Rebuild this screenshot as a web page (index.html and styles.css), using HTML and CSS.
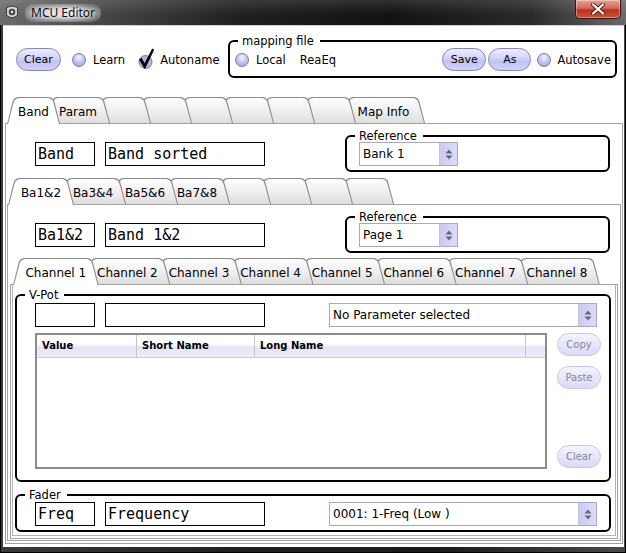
FILE: index.html
```html
<!DOCTYPE html>
<html lang="en">
<head>
<meta charset="utf-8">
<title>MCU Editor</title>
<link rel="stylesheet" href="styles.css">
</head>
<body>
<div class="window">
  <div class="titlebar">
    <svg class="appicon" width="14" height="15" viewBox="0 0 14 15">
      <path d="M1.5 2.5 Q7 -0.5 12.5 2.5 L12.5 10 Q7 15.5 1.5 10 Z" fill="#d4d4d4" stroke="#3a3a3a" stroke-width="1"/>
      <circle cx="7" cy="7" r="3.2" fill="#3c3c3c"/>
      <circle cx="7" cy="7" r="1.4" fill="#e0e0e0"/>
    </svg>
    <span class="title">MCU Editor</span>
    <div class="close">
      <svg width="16" height="12" viewBox="0 0 16 12">
        <path d="M3 1.5 L13 10.5 M13 1.5 L3 10.5" stroke="#5a1a12" stroke-width="4" stroke-linecap="round"/>
        <path d="M3 1.5 L13 10.5 M13 1.5 L3 10.5" stroke="#fff" stroke-width="2.2" stroke-linecap="round"/>
      </svg>
    </div>
  </div>

  <div class="client">
    <div class="toprow">
      <div class="leftctl">
        <div class="pill btn-clear">Clear</div>
        <span class="radio r-learn"></span>
        <span class="lbl l-learn">Learn</span>
        <svg class="check" width="17" height="24" viewBox="0 0 17 24">
          <circle cx="7.5" cy="14" r="6.5" fill="#b4b4ec" stroke="#7a7aa8" stroke-width="1"/>
          <path d="M1 11.5 L3.6 9.8 L6.6 15.2 L14.2 0.6 L16.2 1.8 L6.8 21.2 Z" fill="#000"/>
        </svg>
        <span class="lbl l-auto">Autoname</span>
      </div>
      <fieldset class="group mapgrp">
        <legend>mapping file</legend>
        <div class="mapin">
          <span class="radio"></span>
          <span class="lbl l-local">Local</span>
          <span class="lbl l-reaeq">ReaEq</span>
          <span class="spacer"></span>
          <div class="pill btn-save">Save</div>
          <div class="pill btn-as">As</div>
          <span class="radio r-autosave"></span>
          <span class="lbl l-autosave">Autosave</span>
        </div>
      </fieldset>
    </div>

    <div class="tabset ts1">
      <div class="tabbar tb1">
        <div class="tab sel t-band"><span>Band</span></div>
        <div class="tab t-param"><span>Param</span></div>
        <div class="tab t-empty"></div>
        <div class="tab t-empty"></div>
        <div class="tab t-empty"></div>
        <div class="tab t-empty"></div>
        <div class="tab t-empty"></div>
        <div class="tab t-empty"></div>
        <div class="tab t-map"><span>Map Info</span></div>
      </div>
      <div class="panel">
        <div class="prow pr1">
          <div class="field fs">Band</div>
          <div class="field fl">Band sorted</div>
          <fieldset class="group refgrp">
            <legend>Reference</legend>
            <div class="refin">
              <div class="combo cref"><span class="val">Bank 1</span><span class="arr"><svg width="8" height="11" viewBox="0 0 8 11"><path d="M4 0.5 L7.5 4.5 L0.5 4.5 Z M0.5 6.5 L7.5 6.5 L4 10.5 Z" fill="#66667a"/></svg></span></div>
            </div>
          </fieldset>
        </div>

        <div class="tabset ts2">
          <div class="tabbar tb2">
            <div class="tab sel t-ba"><span>Ba1&amp;2</span></div>
            <div class="tab t-ba"><span>Ba3&amp;4</span></div>
            <div class="tab t-ba"><span>Ba5&amp;6</span></div>
            <div class="tab t-ba"><span>Ba7&amp;8</span></div>
            <div class="tab t-empty"></div>
            <div class="tab t-empty"></div>
            <div class="tab t-empty"></div>
            <div class="tab t-empty"></div>
          </div>
          <div class="panel">
            <div class="prow pr2">
              <div class="field fs">Ba1&amp;2</div>
              <div class="field fl">Band 1&amp;2</div>
              <fieldset class="group refgrp">
                <legend>Reference</legend>
                <div class="refin">
                  <div class="combo cref"><span class="val">Page 1</span><span class="arr"><svg width="8" height="11" viewBox="0 0 8 11"><path d="M4 0.5 L7.5 4.5 L0.5 4.5 Z M0.5 6.5 L7.5 6.5 L4 10.5 Z" fill="#66667a"/></svg></span></div>
                </div>
              </fieldset>
            </div>

            <div class="tabset ts3">
              <div class="tabbar tb3">
                <div class="tab sel t-ch"><span>Channel 1</span></div>
                <div class="tab t-ch"><span>Channel 2</span></div>
                <div class="tab t-ch"><span>Channel 3</span></div>
                <div class="tab t-ch"><span>Channel 4</span></div>
                <div class="tab t-ch"><span>Channel 5</span></div>
                <div class="tab t-ch"><span>Channel 6</span></div>
                <div class="tab t-ch"><span>Channel 7</span></div>
                <div class="tab t-ch"><span>Channel 8</span></div>
              </div>
              <div class="panel">
                <div class="inner">
                  <fieldset class="group vpot">
                    <legend>V-Pot</legend>
                    <div class="gin">
                      <div class="grow">
                        <div class="field fs"></div>
                        <div class="field fl"></div>
                        <div class="combo cwide"><span class="val">No Parameter selected</span><span class="arr"><svg width="8" height="11" viewBox="0 0 8 11"><path d="M4 0.5 L7.5 4.5 L0.5 4.5 Z M0.5 6.5 L7.5 6.5 L4 10.5 Z" fill="#66667a"/></svg></span></div>
                      </div>
                      <div class="trow">
                        <div class="table">
                          <div class="thead">
                            <div class="th c1">Value</div>
                            <div class="th c2">Short Name</div>
                            <div class="th c3">Long Name</div>
                            <div class="th c4"></div>
                          </div>
                        </div>
                        <div class="btncol">
                          <div class="sbtn">Copy</div>
                          <div class="sbtn b-paste">Paste</div>
                          <div class="sbtn b-clear">Clear</div>
                        </div>
                      </div>
                    </div>
                  </fieldset>
                  <fieldset class="group fader">
                    <legend>Fader</legend>
                    <div class="gin">
                      <div class="grow">
                        <div class="field fs">Freq</div>
                        <div class="field fl">Frequency</div>
                        <div class="combo cwide"><span class="val">0001: 1-Freq (Low )</span><span class="arr"><svg width="8" height="11" viewBox="0 0 8 11"><path d="M4 0.5 L7.5 4.5 L0.5 4.5 Z M0.5 6.5 L7.5 6.5 L4 10.5 Z" fill="#66667a"/></svg></span></div>
                      </div>
                    </div>
                  </fieldset>
                </div>
              </div>
            </div>
          </div>
        </div>
      </div>
    </div>
  </div>
</div>
</body>
</html>
```

FILE: styles.css
```css
* { box-sizing: border-box; }

html, body {
  margin: 0;
  padding: 0;
}

body {
  width: 626px;
  height: 553px;
  overflow: hidden;
  background: #2b2b2b;
  font-family: "DejaVu Sans", Verdana, sans-serif;
  font-size: 11.5px;
  color: #000;
}

/* ---------- window frame ---------- */
.window {
  width: 626px;
  height: 553px;
  display: flex;
  flex-direction: column;
  background: linear-gradient(to right, #3a3a3a 0%, #1e1e1e 40%, #1a1a1a 70%, #4a4a4a 100%);
  box-shadow: inset 1px 0 #000, inset -1px 0 #000, inset 0 -1px #000;
}

.titlebar {
  height: 25px;
  flex: none;
  display: flex;
  align-items: center;
  background:
    linear-gradient(to bottom, rgba(255,255,255,0.12), rgba(255,255,255,0) 60%),
    linear-gradient(to right, #6d6d6d 0%, #4a4a4a 14%, #202020 38%, #121212 62%, #2a2a2a 85%, #6a6a6a 100%);
}

.appicon {
  flex: none;
  margin-left: 5px;
}

.title {
  margin-left: 6px;
  font-family: "Noto Sans", "Open Sans", sans-serif;
  font-size: 12px;
  color: #0c0c14;
  padding: 0 6px;
  border-radius: 8px;
  background: radial-gradient(ellipse at center, rgba(220,220,220,0.95) 30%, rgba(180,180,180,0.55) 65%, rgba(120,120,120,0) 100%);
  text-shadow: 0 0 4px #fff, 0 0 8px #fff;
  line-height: 18px;
}

.close {
  margin-left: auto;
  margin-right: 5px;
  align-self: flex-start;
  width: 46px;
  height: 19px;
  border: 1px solid #3c1410;
  border-top: none;
  border-radius: 0 0 5px 5px;
  background: linear-gradient(#e9a196 0%, #d46a58 45%, #b8321f 55%, #c9523a 100%);
  box-shadow: inset 0 0 0 1px rgba(255,255,255,0.35);
  display: flex;
  align-items: center;
  justify-content: center;
}

.client {
  flex: 1;
  margin: 0 2px 6px 3px;
  background: #fff;
  border-top: 1px solid #cfcfcf;
  display: flex;
  flex-direction: column;
}

/* ---------- common widgets ---------- */
.lbl {
  flex: none;
  font-size: 11.5px;
  line-height: 14px;
}

.radio {
  flex: none;
  width: 14px;
  height: 14px;
  border-radius: 50%;
  border: 1px solid #7a7aa8;
  background: radial-gradient(circle at 50% 30%, #f4f4ff 0%, #c6c6f2 45%, #9a9ae0 100%);
}

.pill {
  flex: none;
  height: 23px;
  border-radius: 12px;
  border: 1px solid #8686b4;
  background: linear-gradient(#ececff 0%, #d6d6fa 40%, #c3c3f3 60%, #d2d2f8 100%);
  display: flex;
  align-items: center;
  justify-content: center;
  font-size: 11px;
}

.group {
  margin: 0;
  padding: 0;
  min-width: 0;
  border: 2px solid #000;
  border-radius: 6px;
}

.group legend {
  margin-left: 8px;
  padding: 0 6px 0 4px;
  font-size: 11.5px;
  line-height: 12px;
}

.field {
  flex: none;
  height: 24px;
  border: 1px solid #000;
  background: #fff;
  font-family: "DejaVu Sans Mono", monospace;
  font-size: 15px;
  line-height: 22px;
  padding-left: 2px;
  white-space: pre;
}

.fs { width: 60px; }
.fl { width: 160px; margin-left: 10px; }

.combo {
  flex: none;
  height: 24px;
  border: 1px solid #a8a8c6;
  background: #fff;
  display: flex;
  font-size: 12px;
}

.combo .val {
  flex: 1;
  padding-left: 3px;
  line-height: 22px;
  white-space: pre;
}

.combo .arr {
  width: 18px;
  border-left: 1px solid #c0c0e0;
  background: linear-gradient(to right, #cacaf2, #dcdcf8);
  display: flex;
  align-items: center;
  justify-content: center;
}

/* ---------- top row ---------- */
.toprow {
  flex: none;
  display: flex;
  align-items: flex-start;
  padding: 9px 0 0 13px;
}

.leftctl {
  display: flex;
  align-items: center;
  height: 23px;
  margin-top: 13px;
}

.btn-clear { width: 45px; }
.r-learn { margin-left: 11px; }
.l-learn { margin-left: 7px; }
.check { flex: none; margin-left: 13px; }
.l-auto { margin-left: 5px; }

.mapgrp {
  width: 389px;
  margin-left: auto;
  margin-right: 7px;
}

.mapin {
  display: flex;
  align-items: center;
  height: 29px;
  padding: 1px 4px 5px 5px;
}

.l-local { margin-left: 7px; }
.l-reaeq { margin-left: 14px; }
.spacer { flex: 1; }
.btn-save { width: 44px; }
.btn-as { width: 43px; margin-left: 2px; }
.r-autosave { margin-left: 6px; }
.l-autosave { margin-left: 6px; }

/* ---------- tabs ---------- */
.tabset {
  flex: 1;
  display: flex;
  flex-direction: column;
}

.ts1 { margin: 19px 1px 3px 2px; }
.ts2 { margin: 6px 1px 2px 1px; }
.ts3 { margin: 5px 2px 1px 2px; }

.tabbar {
  flex: none;
  display: flex;
  height: 27px;
  margin-bottom: -1px;
  position: relative;
  z-index: 2;
}

.tb1 { padding-left: 2px; }
.tb2 { padding-left: 1px; }
.tb3 { padding-left: 3px; }

.tab {
  position: relative;
  flex: none;
  height: 27px;
  margin-left: -14px;
  display: flex;
  align-items: center;
  justify-content: center;
  padding-top: 3px;
  font-size: 12px;
  white-space: nowrap;
}

.tab:first-child { margin-left: 0; }

.tab::before,
.tab::after {
  content: "";
  position: absolute;
  left: 0;
  right: 0;
  top: 0;
  bottom: 1px;
  clip-path: polygon(0 100%, 5.5px 5px, 6.5px 2.6px, 8.5px 0.8px, 11px 0, calc(100% - 11px) 0, calc(100% - 8.5px) 0.8px, calc(100% - 6.5px) 2.6px, calc(100% - 5.5px) 5px, 100% 100%);
}

.tab::before { background: #8c8c8c; }

.tab::after {
  left: 1px;
  right: 1px;
  top: 1px;
  background: linear-gradient(#fdfdfd 0%, #f1f1f1 45%, #dedede 100%);
}

.tab.sel::before,
.tab.sel::after { bottom: 0; }
.tab.sel::after { background: #fff; }

.tab span {
  position: relative;
  z-index: 1;
}

.tab:nth-child(1) { z-index: 20; }
.tab:nth-child(2) { z-index: 19; }
.tab:nth-child(3) { z-index: 18; }
.tab:nth-child(4) { z-index: 17; }
.tab:nth-child(5) { z-index: 16; }
.tab:nth-child(6) { z-index: 15; }
.tab:nth-child(7) { z-index: 14; }
.tab:nth-child(8) { z-index: 13; }
.tab:nth-child(9) { z-index: 12; }
.tab.sel { z-index: 30; }

.t-band { width: 53px; }
.t-param { width: 64px; }
.t-empty { width: 55px; }
.t-map { width: 83px; }
.t-ba { width: 66px; }
.t-ch { width: 85.6px; }

.panel {
  flex: 1;
  display: flex;
  flex-direction: column;
  border: 1px solid #a2a2a2;
  background: #fff;
  position: relative;
  z-index: 1;
}

/* ---------- panel rows ---------- */
.prow {
  flex: none;
  display: flex;
  align-items: flex-start;
  margin-top: 6px;
}

.pr1 { padding-left: 29px; }
.pr2 { padding-left: 27px; }

.prow .field { margin-top: 12px; }

.refgrp {
  width: 265px;
  margin-left: 80px;
}

.refin {
  padding: 0 0 4px 12px;
}

.cref { width: 99px; }

/* ---------- channel panel ---------- */
.inner {
  flex: 1;
  margin: 0 1px 2px 1px;
  border: 1px solid #b4b4b4;
  border-top: none;
  display: flex;
  flex-direction: column;
  padding: 0 4px 0 2px;
}

.vpot { margin-top: 4px; }
.fader { margin-top: 7px; }

.gin {
  padding: 0 8px 0 18px;
}

.vpot .gin { padding-top: 2px; padding-bottom: 11px; }
.fader .gin { padding-top: 1px; padding-bottom: 4px; }

.grow {
  display: flex;
  align-items: center;
}

.cwide {
  width: 268px;
  margin-left: auto;
  margin-right: 4px;
}

.trow {
  display: flex;
  align-items: flex-start;
  margin-top: 6px;
}

.table {
  flex: none;
  width: 512px;
  height: 136px;
  border: 2px solid #8c8c8c;
  background: #fff;
}

.thead {
  display: flex;
  height: 23px;
  border-bottom: 1px solid #d0d0da;
  background: linear-gradient(#ffffff 0%, #ffffff 42%, #e4e4f6 56%, #ececfa 100%);
}

.th {
  flex: none;
  border-right: 1px solid #c6c6c6;
  font-size: 10px;
  font-weight: bold;
  padding-left: 5px;
  line-height: 22px;
  white-space: nowrap;
}

.c1 { width: 100px; }
.c2 { width: 118px; }
.c3 { width: 271px; }
.c4 { flex: 1; border-right: none; }

.btncol {
  margin-left: auto;
  width: 44px;
  display: flex;
  flex-direction: column;
}

.sbtn {
  height: 23px;
  border-radius: 12px;
  border: 1px solid #c8c8e6;
  background: linear-gradient(#f4f4ff 0%, #e6e6fc 50%, #dadaf6 100%);
  color: #868696;
  font-size: 10px;
  display: flex;
  align-items: center;
  justify-content: center;
}

.b-paste { margin-top: 10px; }
.b-clear { margin-top: 56px; }
```
